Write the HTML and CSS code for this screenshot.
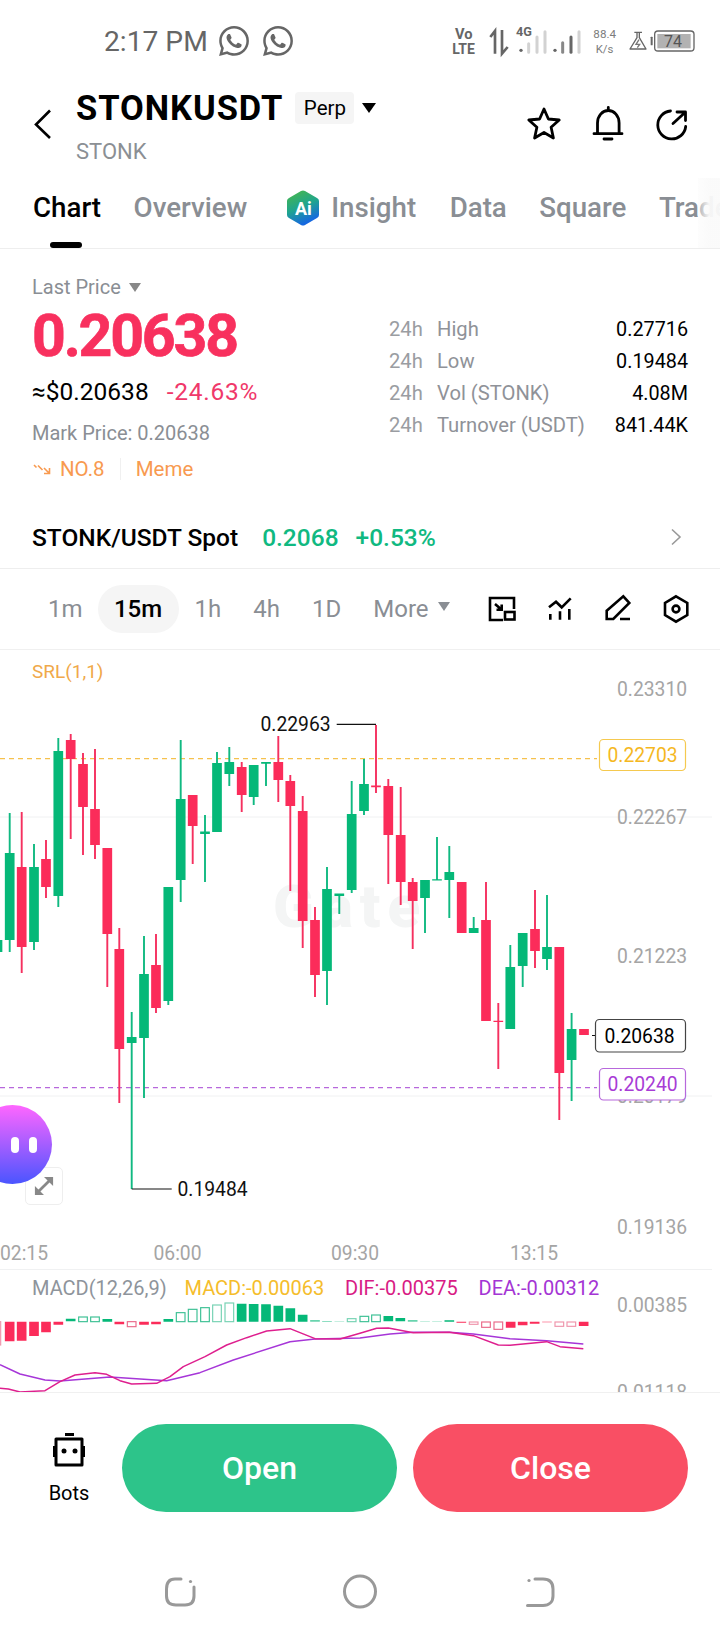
FILE: index.html
```html
<!DOCTYPE html>
<html lang="en">
<head>
<meta charset="utf-8">
<title>STONKUSDT</title>
<link rel="stylesheet" href="styles.css">
</head>
<body>
<div class="page">

<header class="status">
  <span class="clock">2:17 PM</span>
  <svg class="wa" viewBox="0 0 24 24"><path id="wa" d="M12.04 2C6.58 2 2.13 6.45 2.13 11.91C2.13 13.66 2.59 15.36 3.45 16.86L2.05 22L7.3 20.62C8.75 21.41 10.38 21.83 12.04 21.83C17.5 21.83 21.95 17.38 21.95 11.92C21.95 9.27 20.92 6.78 19.05 4.91C17.18 3.03 14.69 2 12.04 2M12.05 3.67C14.25 3.67 16.31 4.53 17.87 6.09C19.42 7.65 20.28 9.72 20.28 11.92C20.28 16.46 16.58 20.15 12.04 20.15C10.56 20.15 9.11 19.76 7.85 19L7.55 18.83L4.43 19.65L5.26 16.61L5.06 16.29C4.24 15 3.8 13.47 3.8 11.91C3.81 7.37 7.5 3.67 12.05 3.67M8.53 7.33C8.37 7.33 8.1 7.39 7.87 7.64C7.65 7.89 7 8.5 7 9.71C7 10.93 7.89 12.1 8 12.27C8.14 12.44 9.76 14.94 12.25 16C12.84 16.27 13.3 16.42 13.66 16.53C14.25 16.72 14.79 16.69 15.22 16.63C15.7 16.56 16.68 16.03 16.89 15.45C17.1 14.87 17.1 14.38 17.04 14.27C16.97 14.17 16.81 14.11 16.56 14C16.31 13.86 15.09 13.26 14.87 13.18C14.64 13.1 14.5 13.06 14.31 13.3C14.15 13.55 13.67 14.11 13.53 14.27C13.38 14.44 13.24 14.46 13 14.34C12.74 14.21 11.94 13.95 11 13.11C10.26 12.45 9.77 11.64 9.62 11.39C9.5 11.15 9.61 11 9.73 10.89C9.84 10.78 10 10.6 10.1 10.45C10.23 10.31 10.27 10.2 10.35 10.04C10.43 9.87 10.39 9.73 10.33 9.61C10.27 9.5 9.77 8.26 9.56 7.77C9.36 7.29 9.16 7.35 9 7.34C8.86 7.34 8.7 7.33 8.53 7.33Z"/></svg>
  <svg class="wa wa2" viewBox="0 0 24 24"><use href="#wa"/></svg>
  <svg class="sys" viewBox="0 0 870 180">
    <text class="s-b" x="75" y="83" font-size="44">Vo</text>
    <text class="s-b" x="67" y="128" font-size="42">LTE</text>
    <path class="s-l" d="M195 128V60L181 78M216 57V128L233 108"/>
    <text class="s-b" x="258" y="75" font-size="38">4G</text>
    <circle class="s-d" cx="273" cy="118" r="5"/>
    <path class="s-bar-l" d="M296 98V124M321 78V124M345 62V124"/>
    <circle class="s-d" cx="375" cy="118" r="5"/>
    <path class="s-bar-m" d="M398 95V124"/>
    <path class="s-bar-d" d="M423 78V124"/>
    <path class="s-bar-l" d="M447 62V124"/>
    <text class="s-r" x="490" y="80" font-size="35">88.4</text>
    <text class="s-r" x="497" y="127" font-size="34">K/s</text>
    <path class="s-l2" d="M613 64H636M621 64V80L600 114H648L628 80V64"/>
    <path class="s-l3" d="M627 86L618 100H629L622 110"/>
    <rect class="s-d" x="662" y="77" width="6" height="26" rx="2"/>
    <rect class="s-batt" x="674" y="60" width="118" height="60" rx="10"/>
    <rect class="s-fill" x="682" y="69" width="100" height="43"/>
    <text class="s-r2" x="702" y="108" font-size="48">74</text>
  </svg>
</header>

<section class="nav">
  <svg class="back" viewBox="0 0 18 30"><path d="M16 1.5L2 15.5L16 29"/></svg>
  <div class="title-col">
    <div class="title-row">
      <h1 class="title">STONKUSDT</h1>
      <span class="chip">Perp</span>
      <span class="caret caret-black"></span>
    </div>
    <div class="sub">STONK</div>
  </div>
  <div class="nav-icons">
    <svg class="ico" viewBox="0 0 36 36"><path d="M18 3L22.4 13L33.2 14L25.1 21.3L27.4 32L18 26.5L8.6 32L10.9 21.3L2.8 14L13.6 13Z"/></svg>
    <svg class="ico" viewBox="0 0 36 36"><path d="M7.5 27.5V17a10.8 12.5 0 0 1 21.6 0V27.5M4 27.7H32M14 33H22M18.3 1.5V4"/></svg>
    <svg class="ico" viewBox="0 0 36 36"><path d="M16.5 5A14 14 0 1 0 31.7 20.5M19 17.5L31 6.5M23 6H31.5V14.5"/></svg>
  </div>
</section>

<nav class="tabs">
  <span class="tab tab-on">Chart</span>
  <span class="tab">Overview</span>
  <svg class="ai" viewBox="0 0 34 36">
    <defs><linearGradient id="aig" x1="0" y1="0" x2="0.4" y2="1"><stop offset="0" stop-color="#4cb944"/><stop offset=".55" stop-color="#1fa58e"/><stop offset="1" stop-color="#1668e0"/></linearGradient></defs>
    <path fill="url(#aig)" d="M15 1Q17 0 19 1L31 8Q33 9 33 11V25Q33 27 31 28L19 35Q17 36 15 35L3 28Q1 27 1 25V11Q1 9 3 8Z"/>
    <text class="ai-t" x="9" y="25" font-size="18">Ai</text>
  </svg>
  <span class="tab tab-insight">Insight</span>
  <span class="tab">Data</span>
  <span class="tab">Square</span>
  <span class="tab">Trade</span>
  <span class="tab-fade"></span>
  <span class="tab-bar"></span>
</nav>

<section class="price">
  <div class="price-left">
    <div class="muted last">Last Price <span class="caret caret-grey"></span></div>
    <div class="big">0.20638</div>
    <div class="usd"><span>≈$0.20638</span><span class="red">-24.63%</span></div>
    <div class="muted mark">Mark Price: 0.20638</div>
    <div class="tags">
      <svg class="trend" viewBox="0 0 18 12"><path d="M1 2L3.5 4.5M5 2.5L9.5 7M11 5L16 10M16.5 5V10.5H11"/></svg>
      <span>NO.8</span><i class="tag-div"></i><span>Meme</span>
    </div>
  </div>
  <dl class="stats">
    <dt>24h</dt><dd class="lab">High</dd><dd class="val">0.27716</dd>
    <dt>24h</dt><dd class="lab">Low</dd><dd class="val">0.19484</dd>
    <dt>24h</dt><dd class="lab">Vol (STONK)</dd><dd class="val">4.08M</dd>
    <dt>24h</dt><dd class="lab">Turnover (USDT)</dd><dd class="val">841.44K</dd>
  </dl>
</section>

<section class="spot">
  <span class="spot-name">STONK/USDT Spot</span>
  <span class="spot-val">0.2068</span>
  <span class="spot-val spot-pct">+0.53%</span>
  <svg class="chev" viewBox="0 0 12 18"><path d="M2 1.5L10 9L2 16.5"/></svg>
</section>

<section class="frames">
  <span class="fr">1m</span>
  <span class="fr fr-on">15m</span>
  <span class="fr">1h</span>
  <span class="fr fr-4h">4h</span>
  <span class="fr fr-1d">1D</span>
  <span class="fr fr-more">More</span>
  <span class="caret caret-grey caret-more"></span>
  <div class="tools">
    <svg class="tool" viewBox="0 0 30 30"><path d="M16 26H3V4H27V15M8 10L14.7 15.7M14.7 10.5V15.7H9.5"/><rect x="18" y="18" width="9.5" height="7.5"/></svg>
    <svg class="tool" viewBox="0 0 30 30"><path d="M4 13.3L11 7.7L16.7 13.3L25.7 4.3M5.3 20V25.7M15 17.3V25.7M24.3 15V25.7"/></svg>
    <svg class="tool" viewBox="0 0 30 30"><path d="M3.7 16.7L20.3 2.3L26.3 9L10.3 25H3.7ZM17 25H27"/></svg>
    <svg class="tool" viewBox="0 0 30 30"><path d="M15 2.3L26.3 9V21L15 27.7L4 21V9Z"/><circle cx="15" cy="15" r="3.4"/></svg>
  </div>
</section>

<section class="chart">
  <svg class="plot" viewBox="0 650 720 742">
    <text class="mark-w" x="273" y="927">Gate</text>
    <path class="grid" d="M0 817H712M0 1096H712M0 1269.5H712"/>
    <text class="t-srl" x="32" y="677.5">SRL(1,1)</text>
    <text class="t-axis" x="617" y="696">0.23310</text>
    <text class="t-axis" x="617" y="824">0.22267</text>
    <text class="t-axis" x="617" y="963">0.21223</text>
    <text class="t-axis" x="617" y="1103">0.20179</text>
    <text class="t-axis" x="617" y="1234">0.19136</text>

    <path class="dash-o" d="M0 758.7H597"/>
    <path class="dash-p" d="M0 1087.7H597"/>

    <path class="w-up" d="M9.7 813V952M34 844V950M58.3 738V907M131.7 1012V1189M144 936V1098M168.3 887V1005M180.7 740V902M205 815V882M217 752V832M229.3 747V786M253.7 765V805M266 762V786M327 867V1005M339.3 894V914M351.7 781V893M364 759V815M425 880V933M437 837V880M449.3 846V918M473.7 917V933M510.3 945V1029M522.7 933V987M547 895V970M571.6 1013V1101"/>
    <path class="b-up" d="M-2.5 940V952M9.7 853V940M34 867V942M58.3 751V896M131.7 1037V1043M144 974V1038M168.3 887V1001M180.7 799V880M205 831.5V834M217 763V832M229.3 762V774M253.7 765V797M266 762V763.8M327 889V971M339.3 893.5V896M351.7 814V890M364 784V811M425 880V898M437 879.3V880.5M449.3 872V880M473.7 928V933M510.3 967V1029M522.7 933V966M547 947V959M571.6 1029V1060"/>
    <path class="w-dn" d="M21.7 812V973M46 840V898M70.7 734V839M83 753V855M95 749V859M107.3 848V987M119.3 928V1103M156 934V1013M192.7 795V864M241.7 762V812M278.3 736V802M290.3 775V891M302.7 796V948M315 907V997M376 725V793M388.3 779V884M400.7 787V905M412.7 878V949M486 882V1021M498.3 1003V1069M535 890V968M559.3 947V1120"/>
    <path class="b-dn" d="M21.7 867V947M46 859V887M70.7 740V759M83 764V807M95 809V845M107.3 848V934M119.3 949V1049M156 965V1008M192.7 795V826M241.7 767V795M278.3 762V780M290.3 781V806M302.7 811V921M315 920V975M376 785.5V787.2M388.3 786V835M400.7 835V882M412.7 882V901M461.7 882V933M486 920V1021M498.3 1020.7V1022M535 929V951M559.3 947V1073M584 1029V1035"/>

    <path class="lead" d="M336.7 724.3H376M131.7 1189H171.7M592 1035.5H595"/>
    <text class="t-note" x="260.5" y="731">0.22963</text>
    <text class="t-note" x="177.5" y="1196">0.19484</text>

    <rect class="tag tag-o" x="599.5" y="739.5" width="86" height="31" rx="4"/>
    <text class="t-axis t-o" x="607.5" y="762">0.22703</text>
    <rect class="tag tag-k" x="595.5" y="1019.5" width="90" height="32.5" rx="4"/>
    <text class="t-axis t-k" x="604.5" y="1042.5">0.20638</text>
    <rect class="tag tag-p" x="599.5" y="1068.5" width="86" height="31.5" rx="4"/>
    <text class="t-axis t-p" x="607.5" y="1091">0.20240</text>

    <text class="t-axis" x="0" y="1260">02:15</text>
    <text class="t-axis" x="153.5" y="1260">06:00</text>
    <text class="t-axis" x="331" y="1260">09:30</text>
    <text class="t-axis" x="510" y="1260">13:15</text>

    <text class="t-leg t-macd" x="32" y="1295">MACD(12,26,9)</text>
    <text class="t-leg t-mo" x="184.5" y="1295">MACD:-0.00063</text>
    <text class="t-leg t-mr" x="345" y="1295">DIF:-0.00375</text>
    <text class="t-leg t-mp" x="478.5" y="1295">DEA:-0.00312</text>
    <text class="t-axis" x="617" y="1312">0.00385</text>
    <text class="t-axis" x="617" y="1399">0.01118</text>

    <g transform="translate(0 1240) scale(.33333)">
      <path class="m-dn" d="M29 245V304M65 245V302M102 245V288M138 245V277M175 245V254M358 245V253M432 245V254M468 245V253M1532 245V263M1568 245V256M1604 245V251M1751 245V258"/>
      <path class="m-up" d="M212 236V244M322 237V245M505 237V245M725 191V245M761 192V245M798 193V245M835 197V245M871 205V245M908 224V245M1165 228V244M1201 234V244M1348 241V245"/>
      <path class="m-up m-faint" d="M945 240V245M981 243V245M1238 240V245"/>
      <path class="m-up m-fainter" d="M1018 243V245M1275 243V245M1311 243V245"/>
      <path class="m-dn" d="M1384 245V248M1641 245V247"/>
      <g class="mh-up">
        <rect x="236" y="231" width="26" height="14"/><rect x="272" y="231" width="26" height="14"/>
        <rect x="529" y="218" width="26" height="27"/><rect x="565" y="208" width="26" height="37"/><rect x="602" y="203" width="26" height="42"/>
        <rect x="638" y="195" width="26" height="50" class="mh-soft"/><rect x="675" y="189" width="26" height="56" class="mh-soft"/>
        <rect x="1042" y="236" width="26" height="9" class="mh-soft"/><rect x="1080" y="229" width="26" height="16"/><rect x="1115" y="225" width="26" height="20"/>
      </g>
      <g class="mh-dn">
        <rect x="-24" y="245" width="26" height="70" class="mh-soft"/><rect x="382" y="245" width="26" height="15"/>
        <rect x="1408" y="246" width="26" height="7" class="mh-soft"/><rect x="1445" y="246" width="26" height="16"/><rect x="1482" y="246" width="26" height="22"/>
        <rect x="1665" y="246" width="26" height="13" class="mh-soft"/><rect x="1701" y="246" width="26" height="13" class="mh-soft"/>
      </g>
      <path class="l-dea" d="M0 374L60 402L135 420L180 423L330 411L500 422L600 398L700 360L870 305L945 297L1080 294L1170 282L1240 277L1348 277L1420 282L1530 296L1640 302L1750 312"/>
      <path class="l-dif" d="M0 445L25 447L60 456L135 452L180 425L225 405L285 398L320 403L360 422L395 432L470 430L510 410L550 380L615 350L680 315L740 293L800 273L870 266L945 296L1020 297L1080 280L1130 265L1165 264L1240 278L1348 277L1420 287L1495 315L1530 316L1640 305L1680 320L1750 326"/>
    </g>
  </svg>
  <button class="expand" aria-label="Expand">
    <svg viewBox="0 0 22 22"><path d="M3.5 18.5L18.5 3.5"/><path class="fillp" d="M11 1H21V11ZM1 11V21H11Z"/></svg>
  </button>
  <div class="bubble"><i></i><i></i></div>
</section>

<footer class="foot">
  <div class="actions">
    <div class="bots">
      <svg class="bot" viewBox="0 0 40 40"><path class="bot-s" d="M7 8H33V34H7Z"/><path class="bot-f" d="M16 2H25V5H16ZM4 15H7V26H4ZM33 15H36V26H33Z"/><circle class="bot-f" cx="15" cy="20" r="2.5"/><circle class="bot-f" cx="26" cy="20" r="2.5"/></svg>
      <span>Bots</span>
    </div>
    <button class="btn btn-open">Open</button>
    <button class="btn btn-close">Close</button>
  </div>
  <div class="sysnav">
    <svg viewBox="0 0 36 36"><path d="M19 5H13C7 5 4.5 9 4.5 15V22C4.5 28 8 31 14 31H23C29 31 32 28 32 22V13"/><circle cx="28.5" cy="7.5" r="1.6"/></svg>
    <svg viewBox="0 0 36 36"><circle class="ring" cx="18" cy="17.5" r="15.5"/></svg>
    <svg viewBox="0 0 36 36"><path d="M13 5H21C28 5 31 9 31 15V22C31 28 27 31.5 21 31.5H5.5"/><circle cx="7" cy="6.5" r="1.6"/></svg>
  </div>
</footer>

</div>
</body>
</html>
```
FILE: styles.css
```css
* { box-sizing: border-box; }
html, body { margin: 0; padding: 0; background: #fff; }
body { font-family: Roboto, "Liberation Sans", sans-serif; color: #000; }
.page { width: 720px; height: 1640px; overflow: hidden; position: relative; }

/* status bar */
.status { height: 82px; display: flex; align-items: center; padding-left: 104px; position: relative; }
.clock { font-size: 28.2px; color: #666; width: 112px; }
.wa { width: 36px; height: 36px; fill: #666; }
.wa2 { margin-left: 8px; }
.sys { width: 290px; height: 60px; margin-left: auto; }
.sys text { font-family: Roboto, sans-serif; }
.s-b { font-weight: 700; fill: #666; }
.s-r { fill: #7d7d7d; }
.s-r2 { fill: #555; }
.s-l { fill: none; stroke: #666; stroke-width: 8; }
.s-l2 { fill: none; stroke: #666; stroke-width: 4; stroke-linejoin: round; }
.s-l3 { fill: none; stroke: #777; stroke-width: 4; }
.s-d { fill: #666; }
.s-bar-l, .s-bar-m, .s-bar-d { fill: none; stroke-width: 9; stroke-linecap: round; }
.s-bar-l { stroke: #d2d2d2; }
.s-bar-m { stroke: #888; }
.s-bar-d { stroke: #666; }
.s-batt { fill: none; stroke: #666; stroke-width: 4; }
.s-fill { fill: #b2b2b2; }

/* title row */
.nav { height: 96px; display: flex; align-items: flex-start; padding-left: 34px; padding-right: 30px; }
.back { width: 18px; height: 30px; margin-top: 27px; flex: none; }
.back path { fill: none; stroke: #000; stroke-width: 2.6; }
.title-col { margin-left: 24px; }
.title-row { display: flex; align-items: center; height: 32px; margin-top: 10px; }
.title { margin: 0; font-size: 34.5px; font-weight: 700; line-height: 32px; letter-spacing: .95px; }
.chip { margin-left: 12px; width: 59px; height: 32px; background: #f5f5f5; border-radius: 4px; font-size: 20.5px; line-height: 32px; text-align: center; }
.caret { display: inline-block; width: 0; height: 0; border-style: solid; border-color: transparent; }
.caret-black { margin-left: 8px; border-width: 10px 7px 0; border-top-color: #000; }
.caret-grey { border-width: 9px 6px 0; border-top-color: #888; vertical-align: 2px; }
.sub { margin-top: 18px; font-size: 22px; line-height: 20px; color: #8b8f94; }
.nav-icons { margin-left: auto; margin-top: 24px; display: flex; gap: 28px; }
.ico { width: 36px; height: 36px; }
.ico path { fill: none; stroke: #000; stroke-width: 2.8; stroke-linejoin: round; stroke-linecap: round; }

/* tabs */
.tabs { height: 71px; border-bottom: 1px solid #eee; display: flex; align-items: flex-start; gap: 32.5px; padding: 13px 0 0 33px; position: relative; overflow: hidden; white-space: nowrap; }
.tab { font-size: 27.7px; line-height: 34px; font-weight: 500; color: #8a8e94; }
.tab-on { color: #000; }
.ai { width: 34px; height: 36px; margin-left: 6px; margin-top: -1px; flex: none; }
.ai-t { font-family: Roboto, sans-serif; font-weight: 700; fill: #fff; }
.tab-insight { margin-left: -21px; margin-right: 1px; }
.tab-fade { position: absolute; right: 0; top: 0; bottom: 0; width: 22px; background: linear-gradient(90deg, rgba(248,248,248,.3), rgba(250,250,250,.95) 50%); }
.tab-bar { position: absolute; left: 50px; top: 64px; width: 32px; height: 6px; border-radius: 3px; background: #000; }

/* price */
.price { height: 260px; display: flex; padding-left: 32px; }
.price-left { width: 357px; padding-top: 26px; }
.muted { color: #8a8e94; font-size: 20px; line-height: 24px; }
.last .caret { margin-left: 3px; }
.big { margin-top: 7px; font-size: 59px; line-height: 60px; font-weight: 700; letter-spacing: -2.2px; color: #f8305e; -webkit-text-stroke: .7px #f8305e; }
.usd { margin-top: 13px; font-size: 24.5px; line-height: 26px; display: flex; gap: 18px; }
.red { color: #f0386a; letter-spacing: .75px; }
.mark { margin-top: 16px; }
.tags { margin-top: 12px; display: flex; align-items: center; font-size: 20.5px; line-height: 24px; color: #f89a50; }
.trend { width: 18px; height: 12px; margin: 0 9px 0 1px; }
.trend path { fill: none; stroke: #f89a50; stroke-width: 1.6; }
.tag-div { width: 1px; height: 22px; background: #f0f0f0; margin: 0 15px; }
.stats { margin: 64px 32px 0 0; flex: 1; display: grid; grid-template-columns: 48px 1fr auto; grid-auto-rows: 32px; align-items: center; font-size: 20.2px; }
.stats dt { color: #9a9da2; }
.stats dd { margin: 0; }
.lab { color: #8f9298; }
.val { color: #000; text-align: right; font-size: 19.8px; }

/* spot */
.spot { height: 60px; border-bottom: 1px solid #eee; display: flex; align-items: center; padding: 0 38px 2px 32px; font-size: 24.5px; font-weight: 500; }
.spot-val { color: #10b981; margin-left: 24px; }
.spot-pct { margin-left: 17px; }
.chev { width: 12px; height: 18px; margin-left: auto; margin-top: -2px; }
.chev path { fill: none; stroke: #999; stroke-width: 1.6; }

/* time frames */
.frames { height: 81px; border-bottom: 1px solid #f0f0f0; display: flex; align-items: center; padding: 0 29px 0 48px; font-size: 24px; color: #8a8e94; }
.fr-on { width: 81px; height: 48px; margin: 0 16px 0 15px; border-radius: 24px; background: #f5f5f5; color: #000; font-weight: 500; text-align: center; line-height: 48px; }
.fr-4h { margin-left: 32px; }
.fr-1d { margin-left: 32px; }
.fr-more { margin-left: 32px; }
.caret-more { margin-left: 9px; margin-top: -6px; border-top-color: #8a8e94; }
.tools { margin-left: auto; display: flex; gap: 28px; }
.tool { width: 30px; height: 30px; }
.tool path, .tool rect, .tool circle { fill: none; stroke: #000; stroke-width: 2.6; }

/* chart */
.chart { height: 742px; position: relative; overflow: hidden; }
.plot { display: block; width: 720px; height: 742px; }
.plot text { font-family: Roboto, sans-serif; }
.mark-w { font-size: 60px; font-weight: 900; letter-spacing: 7px; fill: #f4f5f5; }
.grid { fill: none; stroke: #f0f1f2; stroke-width: 1; }
.t-srl { font-size: 19px; fill: #f0a94a; }
.t-axis { font-size: 19.3px; fill: #a5a5a5; }
.t-leg { font-size: 20px; }
.t-note { font-size: 19.3px; fill: #111; }
.t-o { fill: #f5b81f; }
.t-k { fill: #000; }
.t-p { fill: #a83cd6; }
.t-macd { fill: #8e949b; }
.t-mo { fill: #f5bd2b; }
.t-mr { fill: #d81b84; }
.t-mp { fill: #a435d4; }
.dash-o, .dash-p { fill: none; stroke-width: 1.2; stroke-dasharray: 5 4; }
.dash-o { stroke: #f6c14d; }
.dash-p { stroke: #b768dc; }
.w-up, .w-dn, .b-up, .b-dn { fill: none; }
.w-up { stroke: #10b981; stroke-width: 1.9; }
.w-dn { stroke: #f5305f; stroke-width: 1.9; }
.b-up { stroke: #05b878; stroke-width: 9.7; }
.b-dn { stroke: #fb2c5a; stroke-width: 9.7; }
.lead { fill: none; stroke: #111; stroke-width: 1.2; }
.tag { fill: #fff; stroke-width: 1.2; }
.tag-o { stroke: #f5c94f; }
.tag-k { stroke: #444; }
.tag-p { stroke: #b768dc; }
.m-up, .m-dn { fill: none; stroke-width: 29; }
.m-up { stroke: #05b878; }
.m-dn { stroke: #fb2c5a; }
.m-faint { opacity: .6; }
.m-fainter { opacity: .3; }
.mh-up rect, .mh-dn rect { fill: #fff; stroke-width: 3.5; }
.mh-up rect { stroke: #3cc094; }
.mh-dn rect { stroke: #ea6a8a; }
.mh-soft { opacity: .7; }
.l-dif, .l-dea { fill: none; stroke-width: 4.5; stroke-linejoin: round; }
.l-dif { stroke: #de1f8e; }
.l-dea { stroke: #a636d8; }
.expand { position: absolute; left: 25px; top: 517px; width: 38px; height: 38px; padding: 8px; background: #fff; border: 1.5px solid #eee; border-radius: 5px; }
.expand svg { display: block; width: 20px; height: 20px; }
.expand path { fill: none; stroke: #888; stroke-width: 3; }
.expand .fillp { fill: #888; stroke: none; }
.bubble { position: absolute; left: -27px; top: 455px; width: 79px; height: 79px; border-radius: 40px; background: linear-gradient(180deg, #ff66ff, #4a55ff); display: flex; justify-content: flex-end; gap: 10px; align-items: center; padding-right: 15px; }
.bubble i { width: 8px; height: 16px; border-radius: 4px; background: #fff; }

/* footer */
.foot { border-top: 1px solid #f0f0f0; height: 248px; }
.actions { display: flex; align-items: flex-start; padding-top: 31px; }
.bots { width: 122px; padding-left: 16px; height: 88px; display: flex; flex-direction: column; align-items: center; font-size: 20px; line-height: 24px; }
.bot { width: 40px; height: 40px; margin-top: 7px; margin-bottom: 10px; flex: none; }
.bot-s { fill: none; stroke: #000; stroke-width: 3; stroke-linejoin: round; }
.bot-f { fill: #000; }
.btn { width: 275px; height: 88px; border: 0; border-radius: 44px; color: #fff; font-family: inherit; font-size: 32px; font-weight: 500; padding: 0; }
.btn-open { background: #2dc48a; }
.btn-close { background: #f94f64; margin-left: 16px; }
.sysnav { display: flex; gap: 144px; padding-left: 162px; margin-top: 62px; }
.sysnav svg { width: 36px; height: 36px; }
.sysnav path, .sysnav .ring { fill: none; stroke: #999; stroke-width: 3; stroke-linecap: round; }
.sysnav circle { fill: #999; }
.sysnav .ring { fill: none; }
```
